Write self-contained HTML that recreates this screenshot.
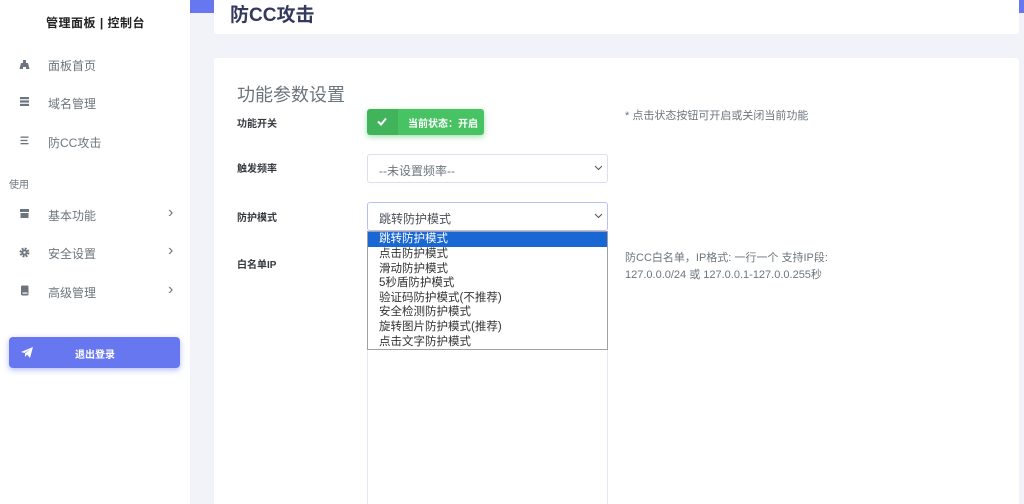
<!DOCTYPE html>
<html><head><meta charset="utf-8"><style>
*{margin:0;padding:0;box-sizing:border-box}
html,body{width:1024px;height:504px;overflow:hidden}
body{background:#f2f3f8;font-family:"Liberation Sans","Noto Sans CJK SC",sans-serif;position:relative}
.a{position:absolute}
.side{left:0;top:0;width:190px;height:504px;background:#fff}
.nav{left:48px;font-size:12px;color:#6c757d}
.ic{left:19px;width:11px;height:11px}
.chev{left:168px;font-size:16px;color:#6c757d;line-height:16px}
.lbl{left:237px;font-size:10px;font-weight:bold;color:#343a40}
.sel{left:367px;width:241px;height:29px;border:1px solid #dcdcf5;border-radius:3px;background:#fff;font-size:12px;color:#6c757d;padding:7px 11px}
.sel svg{position:absolute;right:4px;top:10px}
.hint{font-size:10.5px;color:#6c757d;line-height:17px}
</style></head><body>
<div class="a side"></div>
<div class="a" style="left:46px;top:14px;font-size:12px;font-weight:bold;color:#222;letter-spacing:0.5px">管理面板 | 控制台</div>

<svg class="a ic" style="top:59px" viewBox="0 0 11 11"><path d="M4 1h3v3h2l1.5 6H7V8H4v2H.5L2 4h2z" fill="#6c757d"/></svg>
<div class="a nav" style="top:57px">面板首页</div>
<svg class="a ic" style="top:96px" viewBox="0 0 11 11"><rect x="1" y="1" width="9" height="2.2" fill="#6c757d"/><rect x="1" y="4.4" width="9" height="2.2" fill="#6c757d"/><rect x="1" y="7.8" width="9" height="2.2" fill="#6c757d"/></svg>
<div class="a nav" style="top:95px">域名管理</div>
<svg class="a ic" style="top:135px" viewBox="0 0 11 11"><rect x="1.5" y="1.5" width="8" height="1.3" fill="#6c757d"/><rect x="1.5" y="4.8" width="7" height="1.3" fill="#6c757d"/><rect x="1.5" y="8" width="8" height="1.3" fill="#6c757d"/></svg>
<div class="a nav" style="top:134px">防CC攻击</div>
<div class="a" style="left:9px;top:176px;font-size:10px;color:#6c757d">使用</div>
<svg class="a ic" style="top:208px" viewBox="0 0 11 11"><path d="M1 1h9v3H1z M1.5 5h8v5h-8z" fill="#6c757d"/></svg>
<div class="a nav" style="top:207px">基本功能</div><div class="a chev" style="top:205px">&#x203A;</div>
<svg class="a ic" style="top:247px" viewBox="0 0 11 11"><circle cx="5.5" cy="5.5" r="3.8" fill="none" stroke="#6c757d" stroke-width="2.4" stroke-dasharray="1.8 1.2"/><circle cx="5.5" cy="5.5" r="3" fill="#6c757d"/><circle cx="5.5" cy="5.5" r="1.2" fill="#fff"/></svg>
<div class="a nav" style="top:245px">安全设置</div><div class="a chev" style="top:243px">&#x203A;</div>
<svg class="a ic" style="top:285px" viewBox="0 0 11 11"><rect x="2" y="0.5" width="7.5" height="10" rx="1.2" fill="#6c757d"/><rect x="3.5" y="7.5" width="5" height="1.2" fill="#fff"/></svg>
<div class="a nav" style="top:284px">高级管理</div><div class="a chev" style="top:282px">&#x203A;</div>

<div class="a" style="left:9px;top:337px;width:171px;height:31px;background:#6777ef;border-radius:4px;box-shadow:0 2px 6px rgba(103,119,239,.5)"></div>
<svg class="a" style="left:21px;top:347px" width="12" height="11" viewBox="0 0 12 11"><path d="M0 5L12 0L9 11L6 7.5L4 10V6.5L10 1.5L3.5 6z" fill="#fff"/></svg>
<div class="a" style="left:75px;top:346px;font-size:10px;font-weight:bold;color:#fff">退出登录</div>

<div class="a" style="left:190px;top:0;width:24px;height:13px;background:#6777ef"></div>
<div class="a" style="left:1019px;top:0;width:5px;height:13px;background:#6777ef"></div>
<div class="a" style="left:214px;top:0;width:805px;height:34px;background:#fff;border-radius:0 0 3px 3px"></div>
<div class="a" style="left:230px;top:0px;font-size:19px;font-weight:bold;color:#34395e">防CC攻击</div>

<div class="a" style="left:214px;top:58px;width:805px;height:446px;background:#fff;border-radius:3px 3px 0 0"></div>
<div class="a" style="left:237px;top:81px;font-size:18px;color:#6c757d">功能参数设置</div>

<div class="a lbl" style="top:115px">功能开关</div>
<div class="a" style="left:367px;top:109px;width:117px;height:26px;background:#47c363;border-radius:3px;box-shadow:0 2px 6px rgba(71,195,99,.5);overflow:hidden">
<div style="position:absolute;left:0;top:0;width:31px;height:26px;background:rgba(0,0,0,.08)"></div>
<svg style="position:absolute;left:10px;top:8px" width="10" height="9" viewBox="0 0 10 9"><path d="M1 4.5L4 7.5L9 1.5" fill="none" stroke="#fff" stroke-width="2"/></svg>
<div style="position:absolute;left:41px;top:6px;font-size:10px;font-weight:bold;color:#fff">当前状态：开启</div></div>
<div class="a hint" style="left:625px;top:108px;font-size:11px">* 点击状态按钮可开启或关闭当前功能</div>

<div class="a lbl" style="top:160px">触发频率</div>
<div class="a sel" style="top:154px">--未设置频率--<svg width="9" height="6" viewBox="0 0 9 6"><path d="M1 1l3.5 3.5L8 1" fill="none" stroke="#555" stroke-width="1"/></svg></div>

<div class="a lbl" style="top:209px">防护模式</div>
<div class="a sel" style="top:202px;border-color:#b8bff5;color:#495057">跳转防护模式<svg width="9" height="6" viewBox="0 0 9 6"><path d="M1 1l3.5 3.5L8 1" fill="none" stroke="#555" stroke-width="1"/></svg></div>

<div class="a lbl" style="top:256px">白名单IP</div>
<div class="a" style="left:367px;top:248px;width:241px;height:270px;border:1px solid #e4e6fc;border-radius:3px;background:#fff"></div>
<div class="a" style="left:367px;top:231px;width:241px;height:119px;background:#fff;border:1px solid #a0a0a0;font-size:11.5px;color:#333;line-height:14.6px">
<div style="background:#1967d2;color:#fff;padding-left:11px;height:15px">跳转防护模式</div>
<div style="padding-left:11px">点击防护模式</div>
<div style="padding-left:11px">滑动防护模式</div>
<div style="padding-left:11px">5秒盾防护模式</div>
<div style="padding-left:11px">验证码防护模式(不推荐)</div>
<div style="padding-left:11px">安全检测防护模式</div>
<div style="padding-left:11px">旋转图片防护模式(推荐)</div>
<div style="padding-left:11px">点击文字防护模式</div>
</div>
<div class="a hint" style="left:625px;top:250px;font-size:11px">防CC白名单，IP格式: 一行一个 支持IP段:<br>127.0.0.0/24 或 127.0.0.1-127.0.0.255秒</div>
</body></html>
